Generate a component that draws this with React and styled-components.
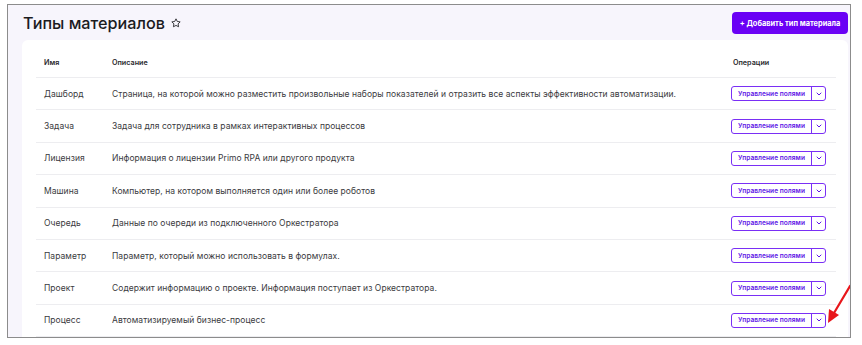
import React from 'react';
import styled, { createGlobalStyle } from 'styled-components';

const GlobalStyle = createGlobalStyle`
  body {
    margin: 0;
    background: #ffffff;
    font-family: Inter, 'Liberation Sans', sans-serif;
  }
`;

const materialTypes = [
  {
    name: 'Дашборд',
    description:
      'Страница, на которой можно разместить произвольные наборы показателей и отразить все аспекты эффективности автоматизации.'
  },
  { name: 'Задача', description: 'Задача для сотрудника в рамках интерактивных процессов' },
  { name: 'Лицензия', description: 'Информация о лицензии Primo RPA или другого продукта' },
  { name: 'Машина', description: 'Компьютер, на котором выполняется один или более роботов' },
  { name: 'Очередь', description: 'Данные по очереди из подключенного Оркестратора' },
  { name: 'Параметр', description: 'Параметр, который можно использовать в формулах.' },
  { name: 'Проект', description: 'Содержит информацию о проекте. Информация поступает из Оркестратора.' },
  { name: 'Процесс', description: 'Автоматизируемый бизнес-процесс' }
];

/* ---------------------------------- Styles ---------------------------------- */
const Frame = styled.div`
  position: relative;
  margin: 4px 0 0 7px;
  width: 842px;
  height: 332px;
  border: 1px solid #8c8c8c;
  background: #f7f5fc;
  overflow: hidden;
`;

const PageHeader = styled.header`
  display: flex;
  align-items: center;
  justify-content: space-between;
  height: 22px;
  padding: 7px 2px 0 15px;
`;

const Title = styled.h1`
  display: flex;
  align-items: center;
  gap: 6px;
  margin: 0;
  font-size: 16.2px;
  font-weight: 500;
  color: #1b1b1f;
`;

const AddButton = styled.button`
  height: 22px;
  width: 116px;
  padding: 0;
  border: none;
  border-radius: 4px;
  background: #6a00f5;
  color: #ffffff;
  font-family: inherit;
  font-size: 7.4px;
  font-weight: 700;
`;

const Card = styled.section`
  margin: 6px 2px 0 14px;
  padding: 0 12px 0 14px;
  background: #ffffff;
  border-radius: 6px;
  height: 320px;
`;

const Row = styled.div`
  display: grid;
  grid-template-columns: 68px 1fr 105px;
  align-items: center;
  padding-left: 8px;
  height: ${props => (props.head ? '29px' : '31.4px')};
  padding-top: ${props => (props.head ? '8px' : '0')};
  border-bottom: 1px solid #ededf0;
  font-size: ${props => (props.head ? '7.2px' : '8.5px')};
  font-weight: ${props => (props.head ? 600 : 400)};
  letter-spacing: ${props => (props.head ? '0' : '0.04px')};
  color: ${props => (props.head ? '#2a2a2e' : '#3a3a40')};
  white-space: nowrap;
`;

const OpsHead = styled.span`
  padding-left: 2px;
`;

const SplitButton = styled.div`
  display: flex;
  width: 95px;
  height: 15px;
  box-sizing: border-box;
  border: 1.5px solid #7a2ff5;
  border-radius: 3px;
`;

const SplitMain = styled.span`
  flex: 1;
  display: flex;
  align-items: center;
  justify-content: center;
  font-size: 6.6px;
  font-weight: 600;
  color: #5f17e6;
  border-right: 1px solid #7a2ff5;
`;

const SplitToggle = styled.span`
  width: 13px;
  display: flex;
  align-items: center;
  justify-content: center;
`;

const Arrow = styled.svg`
  position: absolute;
  left: 808px;
  top: 272px;
`;

/* -------------------------------- Component --------------------------------- */
const Star = () => (
  <svg width="10" height="10" viewBox="0 0 24 24" fill="none" stroke="#2a2a2e" strokeWidth="2.2" strokeLinejoin="round">
    <polygon points="12 2 15.1 8.3 22 9.3 17 14.1 18.2 21 12 17.8 5.8 21 7 14.1 2 9.3 8.9 8.3 12 2" />
  </svg>
);

const Chevron = () => (
  <svg width="6" height="4" viewBox="0 0 6 4" fill="none" stroke="#5f17e6" strokeWidth="1" strokeLinecap="round">
    <polyline points="1 1 3 3 5 1" />
  </svg>
);

export default function App() {
  return (
    <>
      <GlobalStyle />
      <Frame>
        <PageHeader>
          <Title>
            Типы материалов <Star />
          </Title>
          <AddButton>+ Добавить тип материала</AddButton>
        </PageHeader>
        <Card>
          <Row head>
            <span>Имя</span>
            <span>Описание</span>
            <OpsHead>Операции</OpsHead>
          </Row>
          {materialTypes.map(item => (
            <Row key={item.name}>
              <span>{item.name}</span>
              <span>{item.description}</span>
              <SplitButton>
                <SplitMain>Управление полями</SplitMain>
                <SplitToggle>
                  <Chevron />
                </SplitToggle>
              </SplitButton>
            </Row>
          ))}
        </Card>
        <Arrow width="40" height="50" viewBox="0 0 40 50">
          <line x1="34" y1="9" x2="18" y2="36" stroke="#e8161b" strokeWidth="2.2" strokeLinecap="round" />
          <polygon points="12,46 13,32 23,38" fill="#e8161b" />
        </Arrow>
      </Frame>
    </>
  );
}
